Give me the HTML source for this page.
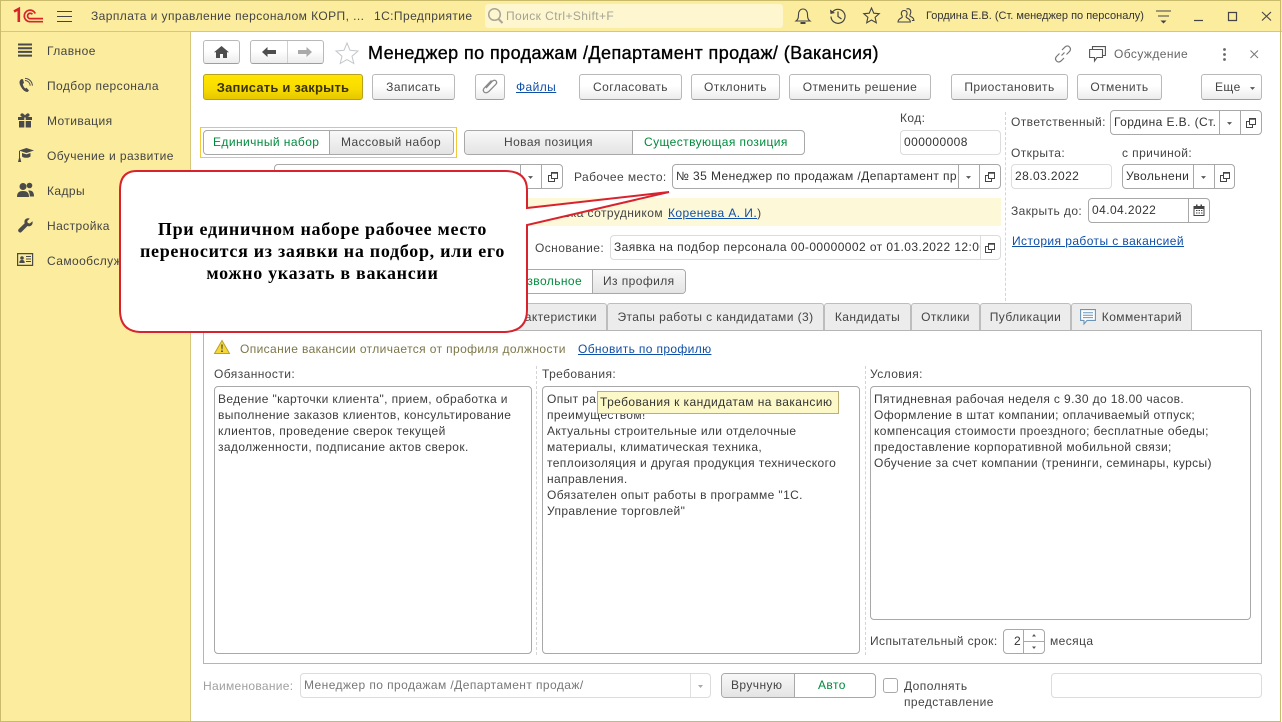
<!DOCTYPE html>
<html lang="ru"><head><meta charset="utf-8"><title>Вакансия</title>
<style>
*{box-sizing:border-box}
html,body{margin:0;padding:0;width:1282px;height:722px;overflow:hidden;background:#fff}
body{font:12px "Liberation Sans","Noto Sans CJK SC",sans-serif;color:#3f3f3f;position:relative}
.a{position:absolute}
.t{position:absolute;white-space:nowrap;line-height:16px;font-size:12px;letter-spacing:.42px;color:#444}
.l{color:#0f4fa8;text-decoration:underline}
.b{position:absolute;border:1px solid #b9b9b9;border-bottom-color:#9e9e9e;border-radius:3px;background:linear-gradient(#fff,#fff 45%,#ececec);text-align:center;line-height:23px;font-size:12px;letter-spacing:.42px;color:#444;white-space:nowrap}
.f{position:absolute;border:1px solid #a8a8a8;border-radius:4px;background:#fff;white-space:nowrap;overflow:hidden;line-height:22px;font-size:12px;letter-spacing:.42px;color:#333;padding-left:3px}
.g{border-color:#dcdcdc}
.d{position:absolute;width:1px;background:#a8a8a8}
.da{position:absolute;width:0;border-left:1px dashed #d4d4d4}
.tab{position:absolute;top:303px;height:28px;border:1px solid #bdbdbd;border-bottom:0;background:#ececec;border-radius:3px 3px 0 0;text-align:center;line-height:27px;font-size:12px;letter-spacing:.42px;color:#444;white-space:nowrap}
.gr{background:linear-gradient(#f8f8f8,#e4e4e4)}
.ta{position:absolute;border:1px solid #a8a8a8;border-radius:4px;background:#fff;padding:4px 3px;line-height:16px;font-size:12px;letter-spacing:.38px;color:#3c3c3c}
svg{position:absolute;overflow:visible}
</style></head><body>
<svg width="0" height="0" style="position:absolute"><defs>
<symbol id="op" viewBox="0 0 12 12"><path d="M4.500 1.500H10.500V7.500H4.500Z M4.500 4.500H1.500V10.500H7.500V7.500" fill="none" stroke="#444" stroke-width="1"/><path d="M4.500 2H10.500" stroke="#444" stroke-width="1.400"/></symbol>
<symbol id="ar" viewBox="0 0 7 4"><path d="M0 0h7L3.500 4z" fill="#555"/></symbol>
</defs></svg>

<!-- title bar -->
<div class="a" style="left:0;top:0;width:1281px;height:722px;border:1px solid #c9bb6c;border-bottom-width:1px;z-index:20;pointer-events:none"></div>
<div class="a" style="left:0;top:0;width:1282px;height:32px;background:#fbec9e;border-bottom:1px solid #d6c77c"></div>
<svg style="left:14px;top:8px" width="30" height="15" viewBox="0 0 30 15"><g fill="none" stroke="#d8232a" stroke-width="1.700"><path d="M0 3.500 4.800 .9V14" stroke-width="2.600"/><path d="M29 13.700H15.500A5.800 5.800 0 1 1 21.300 5.500"/><path d="M29 10.600H15.800A2.700 2.700 0 1 1 18.400 6.300"/></g></svg>
<svg style="left:57px;top:10px" width="15" height="13"><path d="M0 1.500h15M0 6.500h15M0 11.500h15" stroke="#444" stroke-width="1"/></svg>
<div class="t" style="left:91px;top:8px">Зарплата и управление персоналом КОРП, ...</div>
<div class="t" style="left:374px;top:8px">1С:Предприятие</div>
<div class="a" style="left:485px;top:4px;width:298px;height:24px;background:#fdf6cf;border-radius:3px"></div>
<svg style="left:487px;top:7px" width="17" height="18"><circle cx="7.500" cy="7.500" r="5.800" fill="none" stroke="#a9a596" stroke-width="1.500"/><path d="M11.500 12 15.500 16" stroke="#a9a596" stroke-width="2"/></svg>
<div class="t" style="left:506px;top:8px;color:#a5a394">Поиск Ctrl+Shift+F</div>
<svg style="left:795px;top:7px" width="16" height="18"><path d="M1 14c2-1.500 2.500-3 2.500-6.500C3.500 4 5.500 2 8 2s4.500 2 4.500 5.500c0 3.500.5 5 2.500 6.500z" fill="none" stroke="#444" stroke-width="1.100"/><path d="M5.500 16h5" stroke="#444" stroke-width="2"/></svg>
<svg style="left:829px;top:7px" width="18" height="18"><path d="M3.500 5A7 7 0 1 1 2 9.500" fill="none" stroke="#444" stroke-width="1.200"/><path d="M1 2.500 1.500 7 6 6z" fill="#444"/><path d="M9 4.500V9.500L12.500 12" fill="none" stroke="#444" stroke-width="1.200"/></svg>
<svg style="left:863px;top:7px" width="17" height="17"><path d="M8.500 1 10.800 6.200 16.200 6.700 12.100 10.300 13.300 15.800 8.500 13 3.700 15.800 4.900 10.300.8 6.700 6.200 6.200z" fill="none" stroke="#444" stroke-width="1.100"/></svg>
<svg style="left:897px;top:7px" width="18" height="17"><path d="M1 15c0-3 2.500-3.500 4-4.500.5-.7.3-1.500 0-2-1-1-1.200-5 2.200-5s3.200 4 2.200 5c-.3.500-.5 1.300 0 2 1.500 1 4 1.500 4 4.500z" fill="none" stroke="#444" stroke-width="1.100"/><path d="M9.500 2c3-1.200 5 1 4 4.500-.3 1-.8 1.500-.6 2.500 1 1 4 1 4 4.500h-2" fill="none" stroke="#444" stroke-width="1.100"/></svg>
<div class="t" style="left:926px;top:8px;font-size:11px;letter-spacing:0;color:#333">Гордина Е.В. (Ст. менеджер по персоналу)</div>
<svg style="left:1156px;top:10px" width="15" height="14"><path d="M0 1h15M2 6h11" stroke="#444" stroke-width="1"/><path d="M4.500 10.500h6L7.500 13.500z" fill="#444"/></svg>
<svg style="left:1194px;top:10px" width="84" height="13"><path d="M0 10.500h9" stroke="#444" stroke-width="1.200"/><path d="M34.500 2.500h8v8h-8z" fill="none" stroke="#444" stroke-width="1.200"/><path d="M68 2 77 10.500M77 2 68 10.500" stroke="#444" stroke-width="1.100"/></svg>

<!-- sidebar -->
<div class="a" style="left:0;top:32px;width:191px;height:690px;background:#fbec9e;border-right:1px solid #d6c77c"></div>
<svg style="left:17px;top:43px" width="16" height="14"><path d="M1 1.500h14M1 5.200h14M1 8.900h14M1 12.600h14" stroke="#4a4a4a" stroke-width="2"/></svg>
<svg style="left:18px;top:78px" width="15" height="15"><path d="M3.500 1C1 2.500 1 5 2.800 8.500 4.800 12 7 14 9.500 14L11 12.500 8.500 9.800 7.200 10.500C6 9.500 5 7.500 4.800 6L6 5 5 1.300z" fill="#4a4a4a"/><path d="M7 2.500c3 .2 5 2.200 5.200 5.200M7 .4c4.300.2 7.200 3.200 7.400 7.300" fill="none" stroke="#4a4a4a" stroke-width="1"/></svg>
<svg style="left:18px;top:113px" width="14" height="15"><path d="M0 4h6.300v3H0zM7.700 4H14v3H7.700zM1 8h5.300v6.500H1zM7.700 8H13v6.500H7.700z" fill="#4a4a4a"/><path d="M7 3.800C4 3.800 2.500 2.800 3 1.500 3.700 0 6 1 7 3.800 8 1 10.300 0 11 1.500 11.500 2.800 10 3.800 7 3.800z" fill="#4a4a4a" stroke="#4a4a4a" stroke-width="1"/></svg>
<svg style="left:17px;top:148px" width="17" height="15"><path d="M2 2.500 9.500 0 17 2.500 9.500 5z" fill="#4a4a4a"/><path d="M5 5V8.500C6.500 10.200 12 10.200 13.500 8.500V5L9.500 6.400z" fill="#4a4a4a"/><path d="M2.500 3V10" stroke="#4a4a4a" stroke-width="1"/><path d="M1 14 2 10H3.300L4.200 14z" fill="#4a4a4a"/></svg>
<svg style="left:17px;top:182px" width="17" height="15"><circle cx="6" cy="4.500" r="3.500" fill="#4a4a4a"/><circle cx="12.500" cy="3.500" r="2.800" fill="#4a4a4a"/><path d="M0 15c0-4.500 2-6 6-6s6 1.500 6 6z" fill="#4a4a4a"/><path d="M12.800 14.500H17c0-4-1.500-6-4.500-6-.5 0-1 .1-1.400.2 1.300 1.300 1.700 3.200 1.700 5.800z" fill="#4a4a4a"/></svg>
<svg style="left:18px;top:218px" width="15" height="15"><path d="M14.500 3.200 11.800 5.500 9.800 5 9.200 3 11.800.6C9.500-.3 7 .8 6.500 3c-.2 1 0 1.700.2 2.200L.8 11c-.9 1-.9 2 0 2.900.9.900 2 .9 2.800 0L9.500 8c2.800 1 5.800-1 5-4.800z" fill="#4a4a4a"/></svg>
<svg style="left:17px;top:253px" width="16" height="13"><path d="M.6.600h15v11.800H.6z" fill="none" stroke="#4a4a4a" stroke-width="1.200"/><circle cx="5" cy="5" r="1.800" fill="#4a4a4a"/><path d="M2.300 10c0-2.300 1-3 2.700-3s2.700.7 2.700 3z" fill="#4a4a4a"/><path d="M9 3.500h5M9 6h5M9 8.500h5" stroke="#4a4a4a" stroke-width="1"/></svg>
<div class="t" style="left:47px;top:43px">Главное</div>
<div class="t" style="left:47px;top:78px">Подбор персонала</div>
<div class="t" style="left:47px;top:113px">Мотивация</div>
<div class="t" style="left:47px;top:148px">Обучение и развитие</div>
<div class="t" style="left:47px;top:183px">Кадры</div>
<div class="t" style="left:47px;top:218px">Настройка</div>
<div class="t" style="left:47px;top:253px">Самообслуживание</div>

<!-- header row -->
<div class="b" style="left:203px;top:40px;width:37px;height:24px"></div>
<svg style="left:214px;top:46px" width="15" height="12"><path d="M7.500 0 15 6.300H13V12H9V8H6V12H2V6.300H0z" fill="#4d4d4d"/></svg>
<div class="b" style="left:250px;top:40px;width:74px;height:24px"></div>
<div class="d" style="left:287px;top:41px;height:22px;background:#d0d0d0"></div>
<svg style="left:262px;top:47px" width="50" height="10"><path d="M0 5 5.500 0V3H14V7H5.500V10z" fill="#4d4d4d"/><path d="M50 5 44.500 0V3H36V7H44.500V10z" fill="#a9a9a9"/></svg>
<svg style="left:335px;top:42px" width="24" height="22"><path d="M12 1 15 8.300 23 9 17 14.200 18.800 21.500 12 17.600 5.200 21.500 7 14.200 1 9 9 8.300z" fill="#fff" stroke="#c3c7cc" stroke-width="1"/></svg>
<div class="t" style="left:368px;top:43px;font-size:18px;line-height:20px;font-weight:400;color:#000;letter-spacing:.41px;-webkit-text-stroke:.35px #000">Менеджер по продажам /Департамент продаж/ (Вакансия)</div>
<svg style="left:1054px;top:45px" width="18" height="18"><g fill="none" stroke="#777" stroke-width="1.200"><path d="M7.500 10.500 10.500 7.500"/><path d="M8 5 11 2c1.500-1.300 3.300-1.300 4.500 0s1.300 3 0 4.500l-3 3"/><path d="M10 13 7 16c-1.500 1.300-3.300 1.300-4.500 0s-1.300-3 0-4.500l3-3"/></g></svg>
<svg style="left:1089px;top:46px" width="17" height="16"><path d="M3.500 3.500V.6H16.400V9.500H14" fill="none" stroke="#555" stroke-width="1.100"/><path d="M.6 3.500H13.500V11.500H8L5.500 15V11.500H.6z" fill="#fff" stroke="#555" stroke-width="1.100"/></svg>
<div class="t" style="left:1114px;top:46px;color:#666">Обсуждение</div>
<svg style="left:1222px;top:48px" width="5" height="13"><circle cx="2.500" cy="1.500" r="1.400" fill="#666"/><circle cx="2.500" cy="6.500" r="1.400" fill="#666"/><circle cx="2.500" cy="11.500" r="1.400" fill="#666"/></svg>
<svg style="left:1250px;top:50px" width="9" height="9"><path d="M.5.500 8 8M8 .5.500 8" stroke="#777" stroke-width="1"/></svg>

<!-- command bar -->
<div class="b" style="left:203px;top:74px;width:160px;height:26px;background:linear-gradient(#ffe500,#f8dc00 55%,#e6c700);border-color:#b7a11e;color:#3a3300;font-weight:700;font-size:13px;line-height:25px;letter-spacing:.2px">Записать и закрыть</div>
<div class="b" style="left:372px;top:74px;width:83px;height:26px;line-height:25px">Записать</div>
<div class="b" style="left:475px;top:74px;width:30px;height:26px"></div>
<svg style="left:483px;top:79px" width="15" height="15"><path d="M3 9.500 9 3c1.500-1.500 3.200-1.500 4-.6.900 1 .800 2.500-.5 3.800L6 12.800c-1.800 1.800-4 1.800-5 .7-1-1.200-.8-3 .8-4.600L8.500 2" fill="none" stroke="#8a8a8a" stroke-width="1.300" transform="translate(0 -.5)"/></svg>
<div class="t l" style="left:516px;top:79px">Файлы</div>
<div class="b" style="left:579px;top:74px;width:103px;height:26px;line-height:25px">Согласовать</div>
<div class="b" style="left:691px;top:74px;width:89px;height:26px;line-height:25px">Отклонить</div>
<div class="b" style="left:789px;top:74px;width:142px;height:26px;line-height:25px">Отменить решение</div>
<div class="b" style="left:951px;top:74px;width:117px;height:26px;line-height:25px">Приостановить</div>
<div class="b" style="left:1077px;top:74px;width:85px;height:26px;line-height:25px">Отменить</div>
<div class="b" style="left:1201px;top:74px;width:61px;height:26px;line-height:25px;text-align:left;padding-left:13px">Еще</div>
<svg style="left:1250px;top:87px" width="5" height="3"><use href="#ar"/></svg>

<!-- selectors -->
<div class="a" style="left:200px;top:127px;width:257px;height:31px;border:1px solid #f5c73a"></div>
<div class="a" style="left:203px;top:130px;width:251px;height:25px;border:1px solid #a8a8a8;border-radius:4px;background:#fff;overflow:hidden">
 <div class="a gr" style="left:125px;top:0;width:126px;height:23px;border-left:1px solid #a8a8a8"></div>
 <div class="t" style="left:9px;top:3px;color:#008a3c">Единичный набор</div>
 <div class="t" style="left:137px;top:3px">Массовый набор</div>
</div>
<div class="a" style="left:464px;top:130px;width:341px;height:25px;border:1px solid #a8a8a8;border-radius:4px;background:#fff;overflow:hidden">
 <div class="a gr" style="left:0;top:0;width:168px;height:23px;border-right:1px solid #a8a8a8"></div>
 <div class="t" style="left:39px;top:3px">Новая позиция</div>
 <div class="t" style="left:179px;top:3px;color:#008a3c">Существующая позиция</div>
</div>
<div class="t" style="left:900px;top:110px">Код:</div>
<div class="f g" style="left:900px;top:130px;width:101px;height:25px">000000008</div>

<div class="f" style="left:274px;top:164px;width:289px;height:25px"></div>
<div class="d" style="left:520px;top:165px;height:23px"></div><div class="d" style="left:541px;top:165px;height:23px"></div>
<svg style="left:528px;top:176px" width="5" height="3"><use href="#ar"/></svg>
<svg style="left:547px;top:171px" width="12" height="12"><use href="#op"/></svg>
<div class="t" style="left:574px;top:169px">Рабочее место:</div>
<div class="f" style="left:672px;top:164px;width:329px;height:25px"><span style="display:block;width:281px;overflow:hidden">№ 35 Менеджер по продажам /Департамент продаж/</span></div>
<div class="d" style="left:958px;top:165px;height:23px"></div><div class="d" style="left:979px;top:165px;height:23px"></div>
<svg style="left:966px;top:176px" width="5" height="3"><use href="#ar"/></svg>
<svg style="left:984px;top:171px" width="12" height="12"><use href="#op"/></svg>

<div class="a" style="left:400px;top:198px;width:601px;height:28px;background:#fdf8d8"></div>
<div class="t" style="left:530px;top:205px;width:133px;text-align:right;overflow:hidden">Заявка сотрудником</div>
<div class="t" style="left:668px;top:205px"><span class="l">Коренева А. И.</span>)</div>
<div class="t" style="left:535px;top:240px">Основание:</div>
<div class="f g" style="left:610px;top:235px;width:391px;height:25px"><span style="display:block;width:366px;overflow:hidden">Заявка на подбор персонала 00-00000002 от 01.03.2022 12:00:00</span></div>
<div class="d" style="left:980px;top:236px;height:23px;background:#dcdcdc"></div>
<svg style="left:984px;top:242px" width="12" height="12"><use href="#op"/></svg>

<div class="a" style="left:450px;top:269px;width:236px;height:25px;border:1px solid #a8a8a8;border-radius:4px;background:#fff;overflow:hidden">
 <div class="a gr" style="left:141px;top:0;width:95px;height:23px;border-left:1px solid #a8a8a8"></div>
 <div class="t" style="left:46px;top:3px;color:#008a3c">Произвольное</div>
 <div class="t" style="left:152px;top:3px">Из профиля</div>
</div>

<!-- right column -->
<div class="da" style="left:1005px;top:112px;height:219px"></div>
<div class="t" style="left:1011px;top:114px">Ответственный:</div>
<div class="f" style="left:1110px;top:110px;width:152px;height:25px"><span style="display:block;width:106px;overflow:hidden">Гордина Е.В. (Ст. менеджер)</span></div>
<div class="d" style="left:1219px;top:111px;height:23px"></div><div class="d" style="left:1240px;top:111px;height:23px"></div>
<svg style="left:1227px;top:122px" width="5" height="3"><use href="#ar"/></svg>
<svg style="left:1245px;top:117px" width="12" height="12"><use href="#op"/></svg>
<div class="t" style="left:1011px;top:145px">Открыта:</div>
<div class="t" style="left:1122px;top:145px">с причиной:</div>
<div class="f g" style="left:1011px;top:164px;width:101px;height:25px">28.03.2022</div>
<div class="f" style="left:1122px;top:164px;width:113px;height:25px"><span style="display:block;width:63px;overflow:hidden">Увольнение</span></div>
<div class="d" style="left:1193px;top:165px;height:23px"></div><div class="d" style="left:1214px;top:165px;height:23px"></div>
<svg style="left:1201px;top:176px" width="5" height="3"><use href="#ar"/></svg>
<svg style="left:1219px;top:171px" width="12" height="12"><use href="#op"/></svg>
<div class="t" style="left:1011px;top:203px">Закрыть до:</div>
<div class="f" style="left:1088px;top:198px;width:122px;height:25px">04.04.2022</div>
<div class="d" style="left:1188px;top:199px;height:23px"></div>
<svg style="left:1193px;top:204px" width="12" height="12"><path d="M1 2.500h10v9H1z" fill="none" stroke="#444"/><path d="M1 2h10v3H1zM3 .5h1.500V3H3zM7.500.5H9V3H7.500z" fill="#444"/><path d="M3 6.500h1.500M5.500 6.500H7M8 6.500h1.500M3 9h1.500M5.500 9H7M8 9h1.500" stroke="#444"/></svg>
<div class="t l" style="left:1012px;top:233px">История работы с вакансией</div>

<!-- tabs -->
<div class="tab" style="left:450px;width:157px;text-align:right;padding-right:9px">Характеристики</div>
<div class="tab" style="left:607px;width:217px">Этапы работы с кандидатами (3)</div>
<div class="tab" style="left:824px;width:87px">Кандидаты</div>
<div class="tab" style="left:911px;width:69px">Отклики</div>
<div class="tab" style="left:980px;width:91px">Публикации</div>
<div class="tab" style="left:1071px;width:121px;text-align:right;padding-right:9px">Комментарий</div>
<svg style="left:1080px;top:309px" width="16" height="16"><path d="M.6.600H15.400V11.400H7L4 15V11.400H.6z" fill="#fff" stroke="#6a95b8" stroke-width="1.100"/><path d="M3 3.800h10M3 6.200h10M3 8.600h10" stroke="#6a95b8" stroke-width="1"/></svg>
<div class="a" style="left:203px;top:330px;width:1059px;height:334px;border:1px solid #b5b5b5;background:#fff"></div>

<!-- panel -->
<svg style="left:214px;top:340px" width="16" height="14"><path d="M8 .5 15.500 13.500H.5z" fill="#f5d73a" stroke="#b9a22a" stroke-width="1"/><path d="M7.300 4.500h1.400L8.400 9.500H7.600zM7.200 10.500h1.600V12H7.200z" fill="#444"/></svg>
<div class="t" style="left:240px;top:341px;color:#7c7648;letter-spacing:.38px">Описание вакансии отличается от профиля должности</div>
<div class="t l" style="left:578px;top:341px;letter-spacing:.36px">Обновить по профилю</div>
<div class="t" style="left:214px;top:366px">Обязанности:</div>
<div class="t" style="left:542px;top:366px">Требования:</div>
<div class="t" style="left:870px;top:366px">Условия:</div>
<div class="da" style="left:536px;top:366px;height:289px"></div>
<div class="da" style="left:865px;top:366px;height:289px"></div>
<div class="ta" style="left:214px;top:386px;width:318px;height:268px">Ведение "карточки клиента", прием, обработка и<br>выполнение заказов клиентов, консультирование<br>клиентов, проведение сверок текущей<br>задолженности, подписание актов сверок.</div>
<div class="ta" style="left:542px;top:386px;width:318px;height:268px;padding-left:4px">Опыт работы в продажах будет преимуществом!<br>преимуществом!<br>Актуальны строительные или отделочные<br>материалы, климатическая техника,<br>теплоизоляция и другая продукция технического<br>направления.<br>Обязателен опыт работы в программе "1С.<br>Управление торговлей"</div>
<div class="ta" style="left:870px;top:386px;width:381px;height:234px">Пятидневная рабочая неделя с 9.30 до 18.00 часов.<br>Оформление в штат компании; оплачиваемый отпуск;<br>компенсация стоимости проездного; бесплатные обеды;<br>предоставление корпоративной мобильной связи;<br>Обучение за счет компании (тренинги, семинары, курсы)</div>
<div class="a" style="left:597px;top:391px;width:242px;height:23px;background:#fdf8c8;border:1px solid #b9b072"></div>
<div class="t" style="left:600px;top:394px;color:#333">Требования к кандидатам на вакансию</div>
<div class="t" style="left:870px;top:633px">Испытательный срок:</div>
<div class="f" style="left:1003px;top:629px;width:42px;height:25px;text-align:left;padding-left:10px">2</div>
<div class="d" style="left:1023px;top:630px;height:23px"></div>
<div class="a" style="left:1023px;top:641px;width:21px;height:1px;background:#a8a8a8"></div>
<svg style="left:1032px;top:634px" width="4" height="15"><path d="M0 2.500 2 0 4 2.500zM0 12.500h4L2 15z" fill="#555"/></svg>
<div class="t" style="left:1050px;top:633px">месяца</div>

<!-- bottom -->
<div class="t" style="left:203px;top:678px;color:#a0a0a0;letter-spacing:.3px">Наименование:</div>
<div class="f g" style="left:300px;top:673px;width:411px;height:25px;color:#777">Менеджер по продажам /Департамент продаж/</div>
<div class="d" style="left:690px;top:674px;height:23px;background:#e0e0e0"></div>
<svg style="left:698px;top:685px" width="5" height="3"><path d="M0 0h5L2.500 3z" fill="#aaa"/></svg>
<div class="a" style="left:721px;top:673px;width:155px;height:25px;border:1px solid #a8a8a8;border-radius:4px;background:#fff;overflow:hidden">
 <div class="a gr" style="left:0;top:0;width:73px;height:23px;border-right:1px solid #a8a8a8"></div>
 <div class="t" style="left:9px;top:3px">Вручную</div>
 <div class="t" style="left:96px;top:3px;color:#008a3c">Авто</div>
</div>
<div class="a" style="left:883px;top:678px;width:15px;height:15px;border:1px solid #a8a8a8;border-radius:3px;background:#fff"></div>
<div class="t" style="left:904px;top:678px">Дополнять</div>
<div class="t" style="left:904px;top:694px">представление</div>
<div class="f g" style="left:1051px;top:673px;width:211px;height:25px"></div>

<!-- callout -->
<svg style="left:0;top:0;z-index:10" width="1282" height="722"><path d="M137 171H505Q527 171 527 190V208L669 192 527 225V310Q527 331 505 332H140Q120 331 120 310V190Q120 171 137 171Z" fill="#fff" stroke="#d8232f" stroke-width="2" stroke-linejoin="miter"/></svg>
<div class="a" style="left:120px;top:218px;width:405px;text-align:center;z-index:11;font:bold 18px/22px 'Liberation Serif','Noto Serif CJK SC',serif;letter-spacing:.7px;color:#000;white-space:nowrap">При единичном наборе рабочее место<br>переносится из заявки на подбор, или его<br>можно указать в вакансии</div>
</body></html>
